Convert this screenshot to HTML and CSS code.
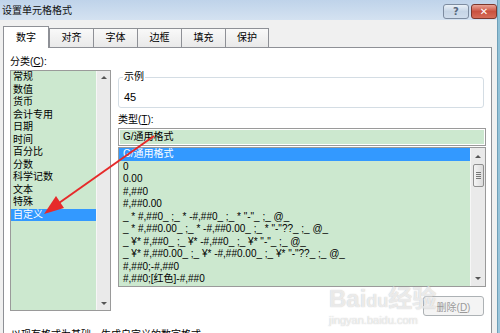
FILE: index.html
```html
<!DOCTYPE html>
<html>

<head>
  <meta charset="utf-8">
  <title>设置单元格格式</title>
  <link rel="stylesheet" href="styles.css">
</head>

<body>
  <div class="window">
    <div class="dialog">
      <div class="titlebar">
        <span class="title">设置单元格格式</span>
        <div class="caption_btns">
          <button class="cap_btn help">?</button>
          <button class="cap_btn close">&#10005;</button>
        </div>
      </div>

      <div class="tabs">
        <div class="tab active">数字</div>
        <div class="tab">对齐</div>
        <div class="tab">字体</div>
        <div class="tab">边框</div>
        <div class="tab">填充</div>
        <div class="tab">保护</div>
      </div>

      <div class="panel">
        <div class="columns">
          <div class="left">
            <div class="label">分类(<u>C</u>):</div>
            <div class="listbox cat_list">
              <ul class="items">
                <li>常规</li>
                <li>数值</li>
                <li>货币</li>
                <li>会计专用</li>
                <li>日期</li>
                <li>时间</li>
                <li>百分比</li>
                <li>分数</li>
                <li>科学记数</li>
                <li>文本</li>
                <li>特殊</li>
                <li class="selected">自定义</li>
              </ul>
              <div class="scrollbar">
                <div class="sb_btn"><span class="tri_up"></span></div>
                <div class="sb_btn"><span class="tri_down"></span></div>
              </div>
            </div>
          </div>

          <div class="right">
            <fieldset class="sample">
              <legend>示例</legend>
              <div class="sample_value">45</div>
            </fieldset>
            <div class="type_label">类型(<u>T</u>):</div>
            <div class="type_input">G/通用格式</div>
            <div class="listbox type_list">
              <ul class="items">
                <li class="selected">G/通用格式</li>
                <li>0</li>
                <li>0.00</li>
                <li>#,##0</li>
                <li>#,##0.00</li>
                <li>_ * #,##0_ ;_ * -#,##0_ ;_ * "-"_ ;_ @_</li>
                <li>_ * #,##0.00_ ;_ * -#,##0.00_ ;_ * "-"??_ ;_ @_</li>
                <li>_ ¥* #,##0_ ;_ ¥* -#,##0_ ;_ ¥* "-"_ ;_ @_</li>
                <li>_ ¥* #,##0.00_ ;_ ¥* -#,##0.00_ ;_ ¥* "-"??_ ;_ @_</li>
                <li>#,##0;-#,##0</li>
                <li>#,##0;[红色]-#,##0</li>
              </ul>
              <div class="scrollbar">
                <div class="sb_btn"><span class="tri_up"></span></div>
                <div class="thumb"><span></span><span></span><span></span><span></span></div>
                <div class="sb_space"></div>
                <div class="sb_btn"><span class="tri_down"></span></div>
              </div>
            </div>
            <button class="del_btn" disabled>删除(<u>D</u>)</button>
          </div>
        </div>
        <div class="hint">以现有格式为基础，生成自定义的数字格式。</div>
      </div>
    </div>
    <div class="frame"></div>
  </div>

  <div class="watermark">
    <span class="wm_big">Bai<span class="wm_du">du</span>经验</span>
    <span class="wm_small">jingyan.baidu.com</span>
  </div>

  <svg class="annot" width="500" height="333" viewBox="0 0 500 333">
    <line x1="154" y1="136" x2="59" y2="203" stroke="#e62a2a" stroke-width="2" />
    <polygon points="44,214 64,208 56,196" fill="#e62a2a" />
  </svg>
</body>

</html>
```

FILE: styles.css
```css
body {
  margin: 0;
  width: 500px;
  height: 333px;
  overflow: hidden;
  position: relative;
  background-color: #f0f0f0;
  color: #000;
  font-family: "Liberation Sans", "Noto Sans CJK SC", sans-serif;
  font-size: 10px;
}
.window {
  display: flex;
  height: 333px;
}
.dialog {
  width: 497px;
  display: flex;
  flex-direction: column;
}
.frame {
  width: 3px;
  background: linear-gradient(#8fc0d6, #9cc6dc);
  border-left: 1px solid #6f9fb8;
  box-sizing: border-box;
}

/* title bar */
.titlebar {
  height: 20px;
  flex: none;
  display: flex;
  justify-content: space-between;
  background: linear-gradient(#bfd3ea, #d4e2f1);
}
.title {
  padding-left: 2px;
  line-height: 22px;
  font-size: 10px;
  color: #111;
}
.caption_btns {
  display: flex;
  gap: 2px;
  margin-top: 4px;
}
.cap_btn {
  width: 26px;
  height: 15px;
  padding: 0;
  border: 1px solid #7d8ca0;
  border-radius: 3px;
  font-family: "DejaVu Sans", sans-serif;
  font-size: 10px;
  font-weight: bold;
  line-height: 13px;
}
.help {
  background: linear-gradient(#eaf1f8, #c6d5e6 50%, #d0ddec);
  color: #56677d;
}
.close {
  background: linear-gradient(#eaa496, #c9513f 50%, #d66c58);
  border-color: #7c372c;
  color: #fff;
}

/* tabs */
.tabs {
  display: flex;
  align-items: flex-end;
  height: 22px;
  flex: none;
  margin: 6px 0 -1px 3px;
  position: relative;
  z-index: 1;
}
.tab {
  width: 44px;
  height: 19px;
  margin-bottom: 1px;
  box-sizing: border-box;
  border: 1px solid #8e9096;
  border-right: none;
  border-bottom: none;
  background: linear-gradient(#f9f9f9, #e9e9e9);
  text-align: center;
  line-height: 18px;
}
.tab:last-child {
  border-right: 1px solid #8e9096;
}
.tab.active {
  width: 46px;
  height: 22px;
  margin-bottom: 0;
  background: #fff;
  border-right: 1px solid #8e9096;
  line-height: 21px;
}

/* panel */
.panel {
  flex: 1;
  width: 489px;
  margin-left: 3px;
  box-sizing: border-box;
  padding-left: 6px;
  background: #fff;
  border: 1px solid #8e9096;
  border-bottom: none;
}
.columns {
  display: flex;
  gap: 7px;
}
.left {
  width: 101px;
  padding-top: 7px;
}
.label {
  line-height: 14px;
  height: 14px;
}
.listbox {
  display: flex;
  box-sizing: border-box;
  border: 1px solid #9a9a9a;
  background-color: #cce8cf;
}
.cat_list {
  margin-top: 1px;
  height: 241px;
}
.items {
  list-style: none;
  margin: 0;
  padding: 0;
  flex: 1;
  overflow: hidden;
}
.items li {
  height: 12.5px;
  line-height: 12.5px;
  padding-left: 2px;
  white-space: nowrap;
}
.items li.selected {
  background-color: #3399ff;
  color: #fff;
}
.scrollbar {
  width: 13px;
  display: flex;
  flex-direction: column;
  justify-content: space-between;
  background-color: #eaeaea;
  border-left: 1px solid #f6f6f6;
}
.sb_btn {
  height: 13px;
  display: flex;
  align-items: center;
  justify-content: center;
}
.tri_up {
  border: 3px solid transparent;
  border-top: none;
  border-bottom: 3px solid #555;
}
.tri_down {
  border: 3px solid transparent;
  border-bottom: none;
  border-top: 3px solid #555;
}

.right {
  width: 368px;
  padding-top: 23px;
}
.sample {
  margin: 0;
  width: 366px;
  box-sizing: border-box;
  padding: 0 5px 3px;
  border: 1px solid #d4dde4;
  border-radius: 3px;
}
.sample legend {
  padding: 0 1px;
  margin-left: -1px;
  line-height: 12px;
}
.sample_value {
  margin-top: 7px;
  line-height: 14px;
  font-size: 11px;
}
.type_label {
  margin-top: 5px;
  line-height: 14px;
}
.type_input {
  margin-top: 1px;
  height: 18px;
  box-sizing: border-box;
  padding-left: 4px;
  line-height: 16px;
  border: 1px solid #9a9a9a;
  background-color: #cce8cf;
  box-shadow: inset 0 0 0 1px #fff;
}
.type_list {
  margin-top: 1px;
  height: 140px;
}
.type_list .items li {
  padding-left: 4px;
}
.type_list .scrollbar {
  width: 14px;
  justify-content: flex-start;
  align-items: center;
}
.type_list .sb_btn {
  height: 16px;
  align-self: stretch;
}
.sb_space {
  flex: 1;
}
.thumb {
  width: 11px;
  height: 23px;
  box-sizing: border-box;
  border: 1px solid #8f8f8f;
  border-radius: 2px;
  background: linear-gradient(90deg, #f4f4f4, #dcdcdc);
  display: flex;
  flex-direction: column;
  justify-content: center;
  align-items: center;
  gap: 1px;
}
.thumb span {
  width: 5px;
  height: 1px;
  background-color: #777;
}
.del_btn {
  display: block;
  width: 61px;
  height: 20px;
  margin: 9px 2px 0 auto;
  padding: 0;
  border: 1px solid #adb2b5;
  border-radius: 3px;
  background-color: #f4f4f4;
  color: #9a9a9a;
  font-family: inherit;
  font-size: 10px;
}
.hint {
  margin-top: 12px;
  padding-left: 1px;
  line-height: 14px;
}

/* overlays */
.watermark {
  position: absolute;
  left: 329px;
  top: 286px;
  display: flex;
  flex-direction: column;
  color: rgba(255, 255, 255, 0.7);
  text-shadow: 0 0 1px rgba(120, 120, 120, 0.5);
  pointer-events: none;
}
.wm_big {
  font-size: 24px;
  font-weight: bold;
  line-height: 26px;
}
.wm_du {
  font-size: 18px;
}
.wm_small {
  font-size: 11px;
  line-height: 12px;
}
.annot {
  position: absolute;
  left: 0;
  top: 0;
  pointer-events: none;
}
```
